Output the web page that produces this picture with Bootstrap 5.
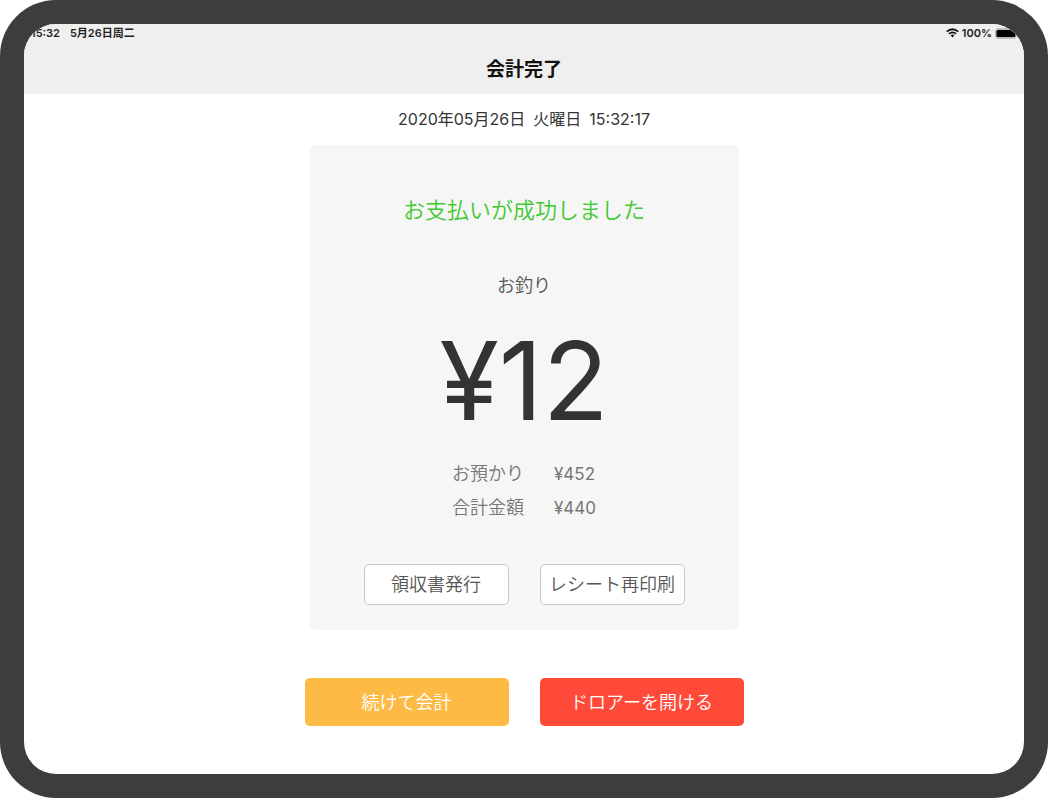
<!DOCTYPE html>
<html lang="ja">
<head>
<meta charset="utf-8">
<meta name="viewport" content="width=device-width, initial-scale=1">
<title>会計完了</title>
<link href="https://cdn.jsdelivr.net/npm/bootstrap@5.3.0/dist/css/bootstrap.min.css" rel="stylesheet">
<script src="https://cdn.jsdelivr.net/npm/bootstrap@5.3.0/dist/js/bootstrap.bundle.min.js" defer></script>
<style>
body{font-family:Inter,"Noto Sans CJK JP",sans-serif;color:#333;background:#fff}
.bezel{min-height:100vh;background:#3d3d3d;border-radius:56px;padding:24px}
.screen{background:#fff;border-radius:32px;overflow:hidden}
.topbar{background:#efefef;height:70px}
.status{font-size:11px;line-height:18px;font-weight:600;color:#222;padding:0 5px 0 7px}
.status-group{gap:10px}
.status-icons{gap:3px}
.title{font-size:19px;line-height:28px;font-weight:700;color:#111;margin-top:14px}
.stamp{font-size:16px;line-height:24px;margin-top:13px;gap:8px}
.receipt{width:429px;max-width:100%;background:#f6f6f6;border-radius:5px;margin-top:14px;padding:48px 24px 25px}
.success{font-size:22px;line-height:34px;color:#40c932;font-weight:350}
.change-label{font-size:18px;line-height:26px;color:#555;font-weight:350;margin-top:46px}
.amount{font-size:108px;line-height:112px;color:#333;margin-top:26px}
.sums{font-size:18px;color:#777}
.sums th,.sums td{font-weight:350;line-height:34px;padding:0}
.sums td{padding-left:30px;font-size:17px;font-weight:400}
.totals{margin-top:20px}
.actions{gap:31px}
.act{--bs-btn-border-radius:5px;--bs-btn-padding-x:0;--bs-btn-padding-y:0;--bs-btn-font-size:18px;--bs-btn-font-weight:350}
.minor-actions{margin-top:39px}
.minor{width:145px;height:41px;--bs-btn-bg:#fff;--bs-btn-border-color:#c8c8c8;--bs-btn-color:#555}
.major{width:204px;height:48px;--bs-btn-color:#fff}
.proceed{--bs-btn-bg:#fdba45}
.drawer{--bs-btn-bg:#ff4a3a}
</style>
</head>
<body>
<div class="bezel d-flex">
<main class="screen flex-grow-1 d-flex flex-column align-items-center">
<header class="topbar w-100">
<div class="status d-flex justify-content-between">
<div class="status-group d-flex"><span>15:32</span><span>5月26日周二</span></div>
<div class="status-icons d-flex align-items-center">
<svg width="13" height="10" viewBox="0 0 13 10" fill="none" stroke="#111" stroke-width="1.7" aria-hidden="true"><path d="M.7 3.6Q6.500-1.100 12.300 3.600M2.900 5.900Q6.500 3 10.100 5.900"/><path d="M4.600 7.300Q6.500 5.900 8.400 7.300L6.500 9.400Z" fill="#111" stroke="none"/></svg>
<span>100%</span>
<svg width="24" height="11" viewBox="0 0 24 11" aria-hidden="true"><rect x=".5" y=".5" width="21" height="10" rx="3" fill="#bbb" stroke="#bbb"/><rect x="1.500" y="2" width="19" height="7" rx="1.500" fill="#000"/><path d="M22.500 3.500Q24 5.500 22.500 7.500Z" fill="#aaa"/></svg>
</div>
</div>
<h1 class="title text-center mb-0">会計完了</h1>
</header>
<time class="stamp d-flex" datetime="2020-05-26T15:32:17"><span>2020年05月26日</span><span>火曜日</span><span>15:32:17</span></time>
<section class="receipt d-flex flex-column align-items-center">
<p class="success mb-0">お支払いが成功しました</p>
<p class="change-label mb-0">お釣り</p>
<p class="amount mb-0">¥12</p>
<table class="sums totals"><tbody><tr><th scope="row">お預かり</th><td>¥452</td></tr><tr><th scope="row">合計金額</th><td>¥440</td></tr></tbody></table>
<div class="actions minor-actions d-flex"><button type="button" class="btn act minor">領収書発行</button><button type="button" class="btn act minor">レシート再印刷</button></div>
</section>
<div class="actions d-flex mt-5"><button type="button" class="btn act major proceed">続けて会計</button><button type="button" class="btn act major drawer">ドロアーを開ける</button></div>
</main>
</div>
</body>
</html>
